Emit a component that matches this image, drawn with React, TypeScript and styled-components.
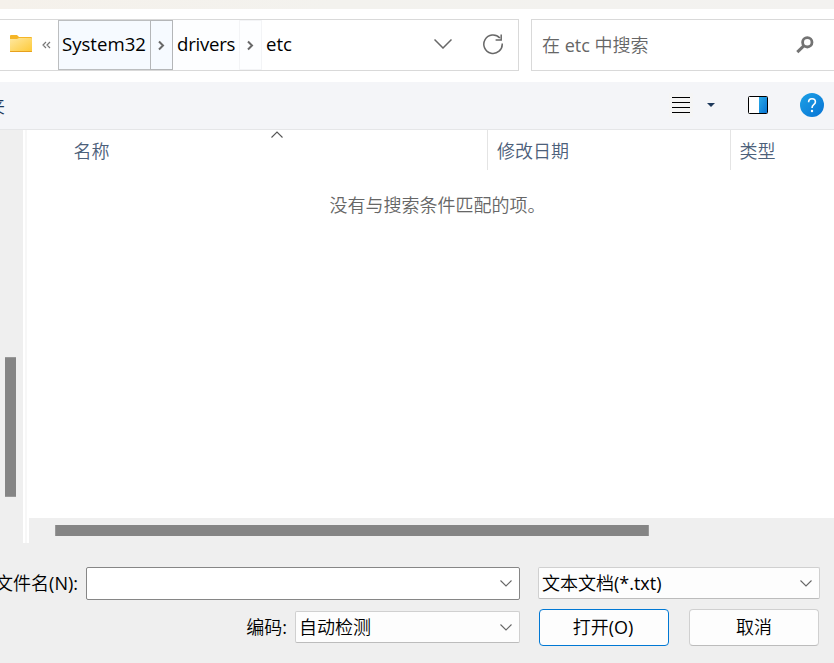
import React, { FunctionComponent } from 'react'
import styled, { createGlobalStyle } from 'styled-components'


interface CrumbProps {
    $width: number,
    $active?: boolean
}

interface ComboProps {
    $width: number,
    $strong?: boolean
}

const GlobalStyle = createGlobalStyle`

    * {
        box-sizing: border-box;
    }

    body {
        margin: 0;
        overflow: hidden;
        background: #efefef;
        font-family: "Open Sans", "Noto Sans CJK SC", sans-serif;
        font-size: 18px;
        font-weight: 350;
        color: #000;
    }

    svg {
        display: block;
        flex: none;
    }

`

const Dialog = styled.div`

    display: flex;
    flex-direction: column;
    width: 834px;
    height: 663px;
    overflow: hidden;
    white-space: nowrap;

`

// Latin glyphs need a heavier cut than the Chinese ones beside them
const Latin = styled.span`

    font-weight: 400;

`

const TitleStrip = styled.div`

    height: 9px;
    background: linear-gradient(90deg, #f5f1eb, #f3f2ee 40%, #f3f2f0);

`

const AddressRow = styled.div`

    display: flex;
    gap: 12px;
    height: 73px;
    padding-top: 10px;
    background: #fff;

`

const AddressBox = styled.div`

    display: flex;
    align-items: center;
    width: 519px;
    height: 52px;
    padding-left: 9px;
    border: 1px solid #d9d9d9;
    border-left: 0;

    .folder {
        margin-bottom: 2px;
    }

`

const Overflow = styled.span`

    width: 25px;
    padding: 0 0 1px 9px;

`

const Crumb = styled.div<CrumbProps>`

    display: flex;
    align-items: center;
    width: ${({$width})=> $width}px;
    height: 50px;
    padding: 0 0 4px 3px;
    border: 1px solid ${({$active})=> $active ? '#bcbec0' : 'transparent'};
    border-right: 0;
    background: ${({$active})=> $active ? '#f6faff' : '#fdfeff'};
    font-size: 18.6px;
    font-weight: 400;
    letter-spacing: ${({$active})=> $active ? 0 : '-.25px'};

`

const CrumbArrow = styled(Crumb)`

    justify-content: center;
    padding: 1px 1px 0 0;
    border: 1px solid ${({$active})=> $active ? '#b4b6b8' : '#f3f4f6'};

`

const LastCrumb = styled.div`

    flex: 1;
    padding: 0 0 4px 4px;
    font-size: 18.6px;
    font-weight: 400;

`

const AddressTools = styled.div`

    display: flex;
    align-items: center;
    gap: 30px;
    padding: 0 14px 2px 0;

`

const SearchBox = styled.div`

    display: flex;
    flex: 1;
    align-items: center;
    justify-content: space-between;
    height: 52px;
    padding: 0 20px 2px 10px;
    border: 1px solid #d9d9d9;
    border-right: 0;
    color: #666;

    svg {
        margin-top: 2px;
    }

`

const Toolbar = styled.div`

    display: flex;
    align-items: center;
    height: 48px;
    padding: 0 10px 2px 0;
    border-bottom: 1px solid #e5e6e8;
    background: #f4f5f8;
    color: #1e395b;

`

// Only the tail of the "new folder" command stays in view
const ClippedCommand = styled.span`

    display: flex;
    flex: 1;
    justify-content: flex-end;
    max-width: 5px;
    margin-right: auto;
    overflow: hidden;

`

const ToolIcons = styled.div`

    display: flex;
    align-items: center;

    .caret {
        margin: 0 33px 0 14px;
    }

    .help {
        margin-left: 32px;
    }

`

const Body = styled.div`

    display: flex;
    height: 413px;
    background: #fff;

`

const NavPane = styled.div`

    width: 23px;
    padding: 227px 0 0 5px;
    background: #efefef;

`

const NavThumb = styled.div`

    width: 11px;
    height: 140px;
    border: solid #999;
    border-width: 1px 0;
    background: #858585;

`

const Splitter = styled.div`

    width: 2px;
    margin: 0 2px;
    background: #f7f7f7;

`

const FileList = styled.div`

    display: flex;
    flex: 1;
    flex-direction: column;

`

const HeaderRow = styled.div`

    display: flex;
    height: 40px;
    color: #4c607a;

`

const HeaderCell = styled.div<{$width?: number, $indent: number}>`

    display: flex;
    flex: ${({$width})=> $width ? `0 0 ${$width}px` : 1};
    align-items: center;
    height: 40px;
    padding: 0 0 1px ${({$indent})=> $indent}px;
    border-right: ${({$width})=> $width ? '1px solid #e4e4e4' : 0};

    svg {
        align-self: flex-start;
        margin: 1px 0 0 161px;
    }

`

const EmptyText = styled.div`

    flex: 1;
    padding: 21px 0 0 300.5px;
    color: #666;

`

const BottomScroll = styled.div`

    height: 25px;
    padding: 7px 0 0 26px;
    background: #efefef;

`

const BottomThumb = styled.div`

    width: 594px;
    height: 11px;
    border: solid #999;
    border-width: 0 1px;
    background: #858585;

`

const Footer = styled.div`

    display: grid;
    flex: 1;
    grid-template-columns: 520px 282px;
    grid-template-rows: 33px 37px;
    column-gap: 18px;
    row-gap: 9px;
    padding-top: 24px;
    background: #efefef;

`

const Field = styled.div`

    display: flex;
    align-items: center;
    justify-content: flex-end;
    gap: 8px;
    min-width: 0;

    div + & {
        padding-bottom: 1px;
    }

`

const Label = styled.label`

    flex: none;
    padding-bottom: 3px;

`

const Combo = styled.div<ComboProps>`

    display: flex;
    flex: none;
    align-items: center;
    justify-content: space-between;
    width: ${({$width})=> $width}px;
    height: ${({$strong})=> $strong ? 33 : 32}px;
    padding: 0 7px 2px 3px;
    border: 1px solid ${({$strong})=> $strong ? '#868686' : '#d0d0d0'};
    border-bottom-color: ${({$strong})=> $strong ? '#868686' : '#bcbcbc'};
    border-radius: 2px;
    background: ${({$strong})=> $strong ? '#fff' : '#fdfdfd'};

    svg {
        margin-top: 2px;
    }

`

const Buttons = styled.div`

    display: flex;
    gap: 20px;
    padding-left: 1px;

`

const PushButton = styled.button<{$primary?: boolean}>`

    width: 130px;
    height: 37px;
    padding: 0 ${({$primary})=> $primary ? 2 : 0}px 3px 0;
    border: 1px solid ${({$primary})=> $primary ? '#0078d4' : '#d0d0d0'};
    border-bottom-color: ${({$primary})=> $primary ? '#0078d4' : '#bcbcbc'};
    border-radius: 4px;
    background: #fdfdfd;
    color: #000;
    font: inherit;

`

const FolderIcon = ()=>(
    <svg className="folder" width="24" height="20" viewBox="0 0 24 20">
        <defs>
            <linearGradient id="folder" x1="0" y1="0" x2="1" y2="1">
                <stop offset="0" stopColor="#ffe8a0" />
                <stop offset="1" stopColor="#fdc936" />
            </linearGradient>
        </defs>
        <path d="M1 2q0-1 1-1h6l2 2h12q1 0 1 1v4H1z" fill="#f5b526" />
        <path d="M1 5h7l2-1h12q1 0 1 1v13H1z" fill="url(#folder)" />
        <path d="M1 17h22v.6q0 .4-.6.4H1.6q-.6 0-.6-.4z" fill="#e7a01d" />
    </svg>
)

const GuillemetIcon = ()=>(
    <svg width="9" height="8" viewBox="0 0 9 8" fill="none" stroke="#777" strokeWidth="1.2">
        <path d="M4 1L1 4l3 3M8 1L5 4l3 3" />
    </svg>
)

const ArrowIcon = ()=>(
    <svg width="8" height="11" viewBox="0 0 8 11" fill="none" stroke="#686868" strokeWidth="2">
        <path d="M2 1.5l4 4-4 4" />
    </svg>
)

const ChevronIcon = ({width = 12, height = 7, stroke = '#666', up = false})=>(
    <svg width={width} height={height} viewBox={`0 0 ${width} ${height}`} fill="none" stroke={stroke} strokeWidth={width > 14 ? 1.5 : 1.1}>
        <path d={up
            ? `M.5 ${height - .5}L${width / 2} 1 ${width - .5} ${height - .5}`
            : `M.5 .5L${width / 2} ${height - 1} ${width - .5} .5`}
        />
    </svg>
)

const RefreshIcon = ()=>(
    <svg width="22" height="22" viewBox="0 0 22 22" fill="none" stroke="#686868" strokeWidth="1.5">
        <path d="M20.2 10.5A9.2 9.2 0 1 1 17.8 5M19.2 1.5v5.4h-5.6" />
    </svg>
)

const SearchIcon = ()=>(
    <svg width="18" height="18" viewBox="0 0 18 18" fill="none" stroke="#737373">
        <circle cx="11.3" cy="6.3" r="4.7" strokeWidth="2.8" />
        <path d="M8 9.7L1.3 16.2" strokeWidth="3" />
    </svg>
)

const ListIcon = ()=>(
    <svg width="24" height="24" viewBox="0 0 24 24">
        <path d="M0 0h24v24H0z" fill="#f5f5f5" />
        <path d="M3 4.5h18M3 9.5h18M3 14.5h18M3 19.5h18" stroke="#000" />
    </svg>
)

const PreviewPaneIcon = ()=>(
    <svg width="20" height="18" viewBox="0 0 20 18">
        <defs>
            <linearGradient id="pane" x1="0" y1="0" x2="1" y2="1">
                <stop offset="0" stopColor="#2aabe8" />
                <stop offset="1" stopColor="#0873d2" />
            </linearGradient>
        </defs>
        <rect x=".5" y=".5" width="19" height="17" rx="1" fill="#fff" stroke="#000" />
        <path d="M11 1h8v16h-8z" fill="url(#pane)" />
    </svg>
)

const HelpIcon = ()=>(
    <svg className="help" width="24" height="24" viewBox="0 0 24 24">
        <defs>
            <linearGradient id="help" x1="0" y1="0" x2="1" y2="1">
                <stop offset="0" stopColor="#1ca1e6" />
                <stop offset="1" stopColor="#0873d4" />
            </linearGradient>
        </defs>
        <circle cx="12" cy="12" r="12" fill="url(#help)" />
        <path d="M8.6 9.3q0-3.6 3.4-3.6t3.4 3.2q0 1.5-1.7 2.8T12 15" fill="none" stroke="#fff" strokeWidth="1.6" />
        <circle cx="12" cy="18" r="1.2" fill="#fff" />
    </svg>
)

const App: FunctionComponent = ()=>{

    return (
        <Dialog>
            <GlobalStyle />
            <TitleStrip />

            <AddressRow>
                <AddressBox>
                    <FolderIcon />
                    <Overflow><GuillemetIcon /></Overflow>
                    <Crumb $width={92} $active>System32</Crumb>
                    <CrumbArrow $width={23} $active><ArrowIcon /></CrumbArrow>
                    <Crumb $width={66}>drivers</Crumb>
                    <CrumbArrow $width={23}><ArrowIcon /></CrumbArrow>
                    <LastCrumb>etc</LastCrumb>
                    <AddressTools>
                        <ChevronIcon width={18} height={10} stroke="#686868" />
                        <RefreshIcon />
                    </AddressTools>
                </AddressBox>
                <SearchBox>
                    <span>在 <Latin>etc</Latin> 中搜索</span>
                    <SearchIcon />
                </SearchBox>
            </AddressRow>

            <Toolbar>
                <ClippedCommand>新建文件夹</ClippedCommand>
                <ToolIcons>
                    <ListIcon />
                    <svg className="caret" width="8" height="4" viewBox="0 0 8 4"><path d="M0 0h8L4 4z" fill="#1e395b" /></svg>
                    <PreviewPaneIcon />
                    <HelpIcon />
                </ToolIcons>
            </Toolbar>

            <Body>
                <NavPane><NavThumb /></NavPane>
                <Splitter />
                <FileList>
                    <HeaderRow>
                        <HeaderCell $width={459} $indent={44.5}>名称<ChevronIcon up stroke="#555" /></HeaderCell>
                        <HeaderCell $width={243} $indent={9}>修改日期</HeaderCell>
                        <HeaderCell $indent={8.5}>类型</HeaderCell>
                    </HeaderRow>
                    <EmptyText>没有与搜索条件匹配的项。</EmptyText>
                    <BottomScroll><BottomThumb /></BottomScroll>
                </FileList>
            </Body>

            <Footer>
                <Field>
                    <Label>文件名<Latin>(N):</Latin></Label>
                    <Combo $width={434} $strong><span /><ChevronIcon /></Combo>
                </Field>
                <Combo $width={282}><span>文本文档<Latin>(*.txt)</Latin></span><ChevronIcon /></Combo>
                <Field>
                    <Label>编码<Latin>:</Latin></Label>
                    <Combo $width={225}>自动检测<ChevronIcon /></Combo>
                </Field>
                <Buttons>
                    <PushButton $primary>打开<Latin>(O)</Latin></PushButton>
                    <PushButton>取消</PushButton>
                </Buttons>
            </Footer>
        </Dialog>
    )

}

export default App
